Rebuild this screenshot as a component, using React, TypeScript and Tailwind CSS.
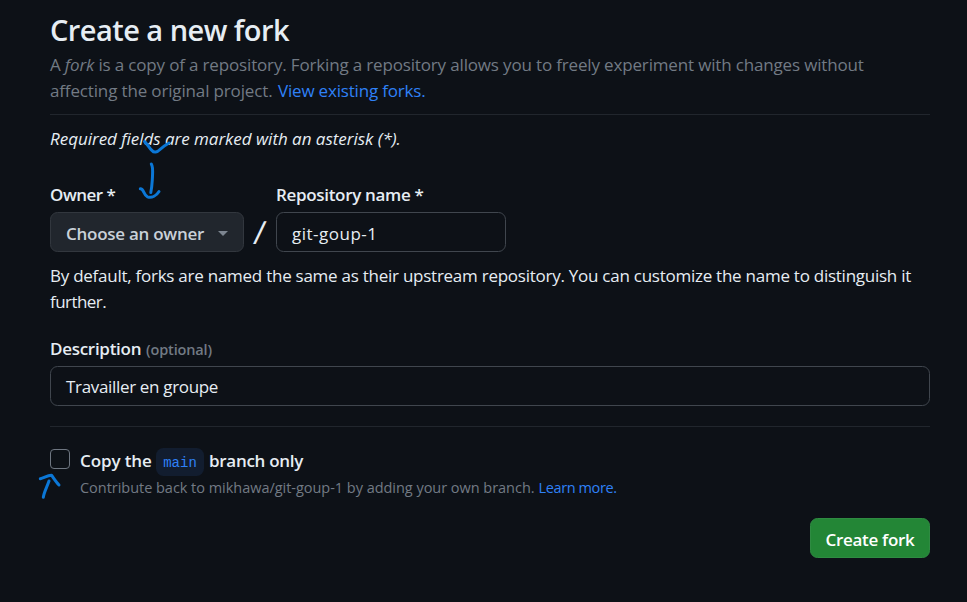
function Scribbles() {
  return (
    <svg
      className="pointer-events-none absolute left-0 top-0"
      width="967"
      height="602"
      fill="none"
      stroke="#0b77d6"
      strokeWidth="3"
      strokeLinecap="round"
      strokeLinejoin="round"
      aria-hidden="true"
    >
      <path d="M144.5 141.5C147 143.5 149 148 152 150.5C154 153 157 152.5 160 149.5C163 146.5 165.5 145 169 143" />
      <path d="M151.3 164C153.5 167 152.5 174 152.3 180C152 185 151.5 189 150.8 192.5" />
      <path d="M140.3 188.8C144 188.5 143.5 195 147.5 196.8C152 198.3 156.5 195.5 159 191.5" />
      <path d="M43.3 497.3C44 492 47 487 49 481" />
      <path d="M40.3 478.7C44 478 47 475.5 51.5 475.2C53.5 478 56 482 59 485" />
    </svg>
  );
}

export default function App() {
  return (
    <div className="relative h-[602px] w-[967px] overflow-hidden bg-[#0d1117] pl-[50px] font-['Open_Sans','Noto_Sans',sans-serif] text-[17px] leading-[26px] text-[#e6edf3]">
      <main className="flex w-[880px] flex-col">
        <h1 className="mt-[10px] h-[42px] text-[29px] font-semibold leading-[40px] tracking-[-0.54px]">Create a new fork</h1>
        <div className="h-[63px] whitespace-nowrap border-b border-[#21262d] text-[#727a84]">
          <p className="tracking-[-0.16px]">
            A <em>fork</em> is a copy of a repository. Forking a repository allows you to freely experiment with changes without
          </p>
          <p className="flex">
            <span className="w-[228px] tracking-[-0.15px]">affecting the original project.</span>
            <a className="tracking-[-0.19px] text-[#2f81f7]">View existing forks.</a>
          </p>
        </div>
        <p className="mt-[11px] italic tracking-[-0.03px]">Required fields are marked with an asterisk (*).</p>

        <div className="mt-[30px] flex">
          <div className="w-[194px]">
            <label className="block h-[30px] font-semibold tracking-[-0.5px]">Owner *</label>
            <button className="flex h-10 w-full items-center rounded-[7.5px] border border-[#32373e] bg-[#21262d] pl-[15px] pt-[3px] font-semibold tracking-[-0.27px] text-[#c9d1d9]">
              Choose an owner
              <span className="mb-px ml-[14px] h-0 w-0 border-x-[5px] border-t-[5px] border-x-transparent border-t-[#7d8590]" />
            </button>
          </div>
          <span className="flex h-[70px] w-[32px] items-center justify-center pt-[30px]">
            <span className="-skew-x-6 text-[32px] leading-none">/</span>
          </span>
          <div className="w-[230px]">
            <label className="block h-[30px] font-semibold tracking-[-0.32px]">Repository name *</label>
            <div className="flex h-10 items-center rounded-[7.5px] border border-[#40464e] pl-[15px] pt-[3px] tracking-[0.5px]">git-goup-1</div>
          </div>
        </div>

        <div className="mt-[11px] whitespace-nowrap">
          <p className="tracking-[-0.255px]">By default, forks are named the same as their upstream repository. You can customize the name to distinguish it</p>
          <p className="tracking-[-0.55px]">further.</p>
        </div>

        <div className="mt-[21px] flex h-[30px]">
          <label className="w-[96px] font-semibold tracking-[-0.28px]">Description</label>
          <span className="pt-px text-[14.5px] font-semibold tracking-[-0.14px] text-[#727a84]">(optional)</span>
        </div>
        <div className="flex h-10 items-center rounded-[7.5px] border border-[#40464e] pl-[15px] pt-px tracking-[-0.33px]">Travailler en groupe</div>

        <div className="mt-5 flex h-[75px] border-t border-[#21262d] pt-[21px]">
          <div className="mt-px h-5 w-5 rounded-[4px] border border-[#6e7681]" />
          <div className="ml-[10px]">
            <div className="flex h-[27px] items-center font-semibold">
              <span className="w-[76px] pb-[2px] tracking-[-0.1px]">Copy the</span>
              <code className="mr-[5px] flex h-7 w-12 items-center justify-center rounded-[7.5px] bg-[#121d2f] pt-[3px] font-['Liberation_Mono',monospace] text-[14px] font-normal text-[#2f81f7]">main</code>
              <span className="pb-[2px] tracking-[-0.3px]">branch only</span>
            </div>
            <p className="flex whitespace-nowrap text-[14.5px] text-[#727a84]">
              <span className="w-[458.5px] tracking-[-0.03px]">Contribute back to mikhawa/git-goup-1 by adding your own branch.</span>
              <a className="tracking-[-0.38px] text-[#2f81f7]">Learn more.</a>
            </p>
          </div>
        </div>

        <button className="mt-[17px] flex h-10 w-[120px] items-center justify-center self-end rounded-[7.5px] border border-[#2f8b42] bg-[#238636] pt-[3px] font-semibold tracking-[-0.3px] text-white">
          Create fork
        </button>
      </main>
      <Scribbles />
    </div>
  );
}
